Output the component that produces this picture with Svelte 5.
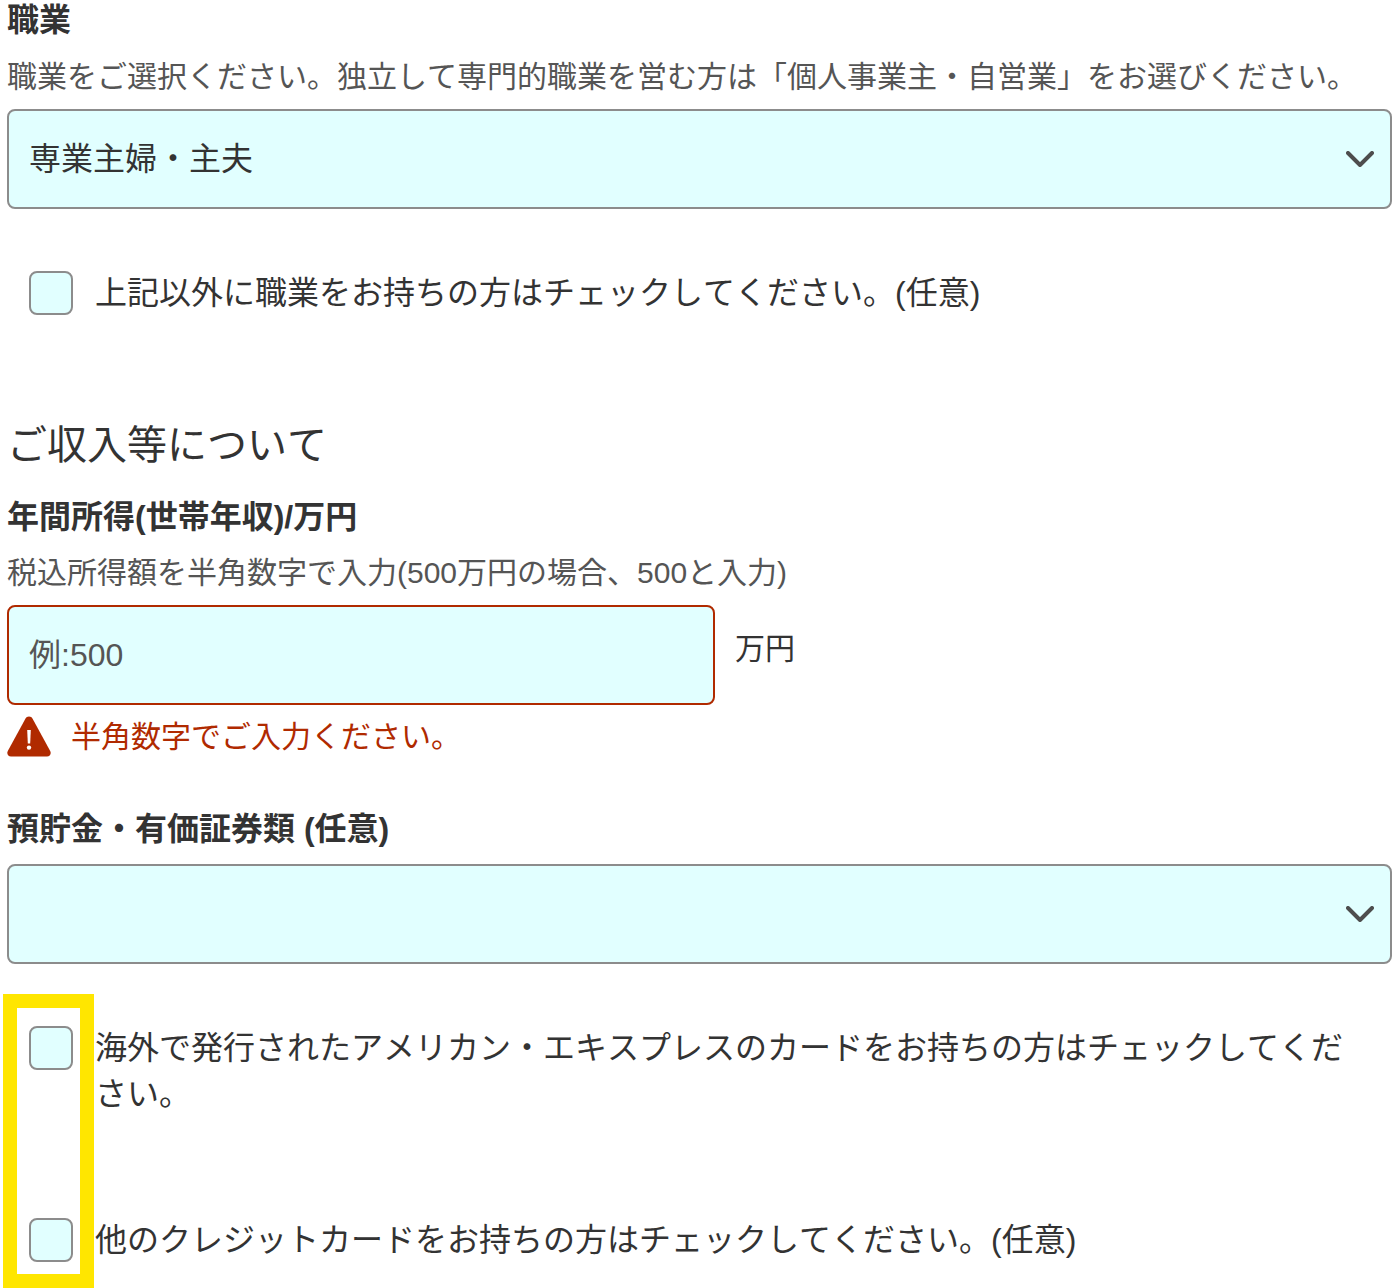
<script>
	let occupation = $state('housewife');
	let otherJob = $state(false);
	let income = $state('');
	let savings = $state('');
	let amex = $state(false);
	let otherCard = $state(false);
</script>

<main class="form">
	<section class="field">
		<label class="label first" for="occupation">職業</label>
		<p class="note">職業をご選択ください。独立して専門的職業を営む方は「個人事業主・自営業」をお選びください。</p>
		<div class="select-wrap">
			<select id="occupation" bind:value={occupation}>
				<option value="housewife">専業主婦・主夫</option>
			</select>
			<svg class="chevron" viewBox="0 0 28 16" width="28" height="16" aria-hidden="true">
				<path d="M2 2 L14 14 L26 2" />
			</svg>
		</div>
	</section>

	<label class="check single">
		<input type="checkbox" bind:checked={otherJob} />
		<span>上記以外に職業をお持ちの方はチェックしてください。(任意)</span>
	</label>

	<h2>ご収入等について</h2>

	<section class="field">
		<label class="label" for="income">年間所得(世帯年収)/万円</label>
		<p class="note">税込所得額を半角数字で入力(500万円の場合、500と入力)</p>
		<div class="income-row">
			<input id="income" class="text-input" type="text" placeholder="例:500" bind:value={income} />
			<span class="unit">万円</span>
		</div>
		<div class="error">
			<svg viewBox="0 0 44 41" width="44" height="41" aria-hidden="true">
				<path class="warn" d="M22 0.5 C23.6 0.5 24.8 1.4 25.6 2.8 L43.2 35 C44.6 37.7 43 40.5 40 40.5 L4 40.5 C1 40.5 -0.6 37.7 0.8 35 L18.4 2.8 C19.2 1.4 20.4 0.5 22 0.5 Z" />
				<path class="mark" d="M20.2 14 H23.8 L23.2 27.5 H20.8 Z" />
				<circle class="mark" cx="22" cy="31.6" r="2.2" />
			</svg>
			<span>半角数字でご入力ください。</span>
		</div>
	</section>

	<section class="field savings">
		<label class="label" for="savings">預貯金・有価証券類 (任意)</label>
		<div class="select-wrap">
			<select id="savings" bind:value={savings}>
				<option value=""></option>
			</select>
			<svg class="chevron" viewBox="0 0 28 16" width="28" height="16" aria-hidden="true">
				<path d="M2 2 L14 14 L26 2" />
			</svg>
		</div>
	</section>

	<div class="card-checks">
		<!-- yellow highlight over the checkbox column -->
		<div class="highlight"></div>
		<label class="check">
			<input type="checkbox" bind:checked={amex} />
			<span>海外で発行されたアメリカン・エキスプレスのカードをお持ちの方はチェックしてください。</span>
		</label>
		<label class="check">
			<input type="checkbox" bind:checked={otherCard} />
			<span>他のクレジットカードをお持ちの方はチェックしてください。(任意)</span>
		</label>
	</div>
</main>

<style>
	:global(body) {
		margin: 0;
		background: #fff;
		overflow: hidden;
	}

	.form {
		display: flow-root;
		width: 1385px;
		height: 1288px;
		margin-left: 7px;
		position: relative;
		color: #333;
		font-family: "Liberation Sans", "Noto Sans CJK JP", sans-serif;
		font-size: 32px;
		font-kerning: none;
	}

	.label {
		display: block;
		margin: 0;
		font-size: 32px;
		line-height: 46px;
		font-weight: 700;
	}

	.label.first {
		margin-top: -3px;
		padding-bottom: 1px;
	}

	.note {
		margin: 10px 0 9px;
		font-size: 30px;
		line-height: 46px;
		color: #555;
	}

	.select-wrap {
		position: relative;
	}

	select {
		display: block;
		width: 100%;
		height: 100px;
		box-sizing: border-box;
		padding: 0 70px 0 20px;
		appearance: none;
		background: #e1ffff;
		border: 2px solid #8c8c8c;
		border-radius: 8px;
		color: #333;
		font: inherit;
	}

	.chevron {
		position: absolute;
		right: 18px;
		top: 42px;
		pointer-events: none;
	}

	.chevron path {
		fill: none;
		stroke: #4d4d4d;
		stroke-width: 4;
		stroke-linecap: round;
		stroke-linejoin: round;
	}

	.check {
		display: flex;
		align-items: flex-start;
		gap: 22px;
		padding: 0 48px 0 22px;
		line-height: 46px;
	}

	.check.single {
		margin-top: 62px;
	}

	.check input {
		flex: none;
		width: 44px;
		height: 44px;
		margin: 0;
		box-sizing: border-box;
		appearance: none;
		background: #e1ffff;
		border: 2px solid #8c8c8c;
		border-radius: 8px;
	}

	.check span {
		margin-top: -1px;
	}

	h2 {
		margin: 100px 0 0;
		font-size: 40px;
		line-height: 58px;
		font-weight: 400;
	}

	h2 + .field {
		margin-top: 20px;
	}

	.income-row {
		display: flex;
		gap: 20px;
	}

	.text-input {
		width: 708px;
		height: 100px;
		box-sizing: border-box;
		padding: 0 20px;
		background: #e1ffff;
		border: 2px solid #b02a00;
		border-radius: 8px;
		color: #333;
		font: inherit;
	}

	.text-input::placeholder {
		color: #555;
		opacity: 1;
	}

	.unit {
		font-size: 30px;
		line-height: 88px;
	}

	.error {
		display: flex;
		align-items: center;
		gap: 20px;
		margin-top: 11px;
		font-size: 30px;
		line-height: 41px;
		color: #b02a00;
	}

	.warn {
		fill: #b02a00;
	}

	.mark {
		fill: #fff;
	}

	.savings {
		margin-top: 49px;
	}

	.savings .label {
		margin-bottom: 12px;
	}

	.card-checks {
		display: flex;
		flex-direction: column;
		gap: 101px;
		margin-top: 62px;
	}

	.highlight {
		position: absolute;
		left: -4px;
		top: 994px;
		width: 63px;
		height: 266px;
		border: 14px solid #ffe600;
		pointer-events: none;
	}
</style>
